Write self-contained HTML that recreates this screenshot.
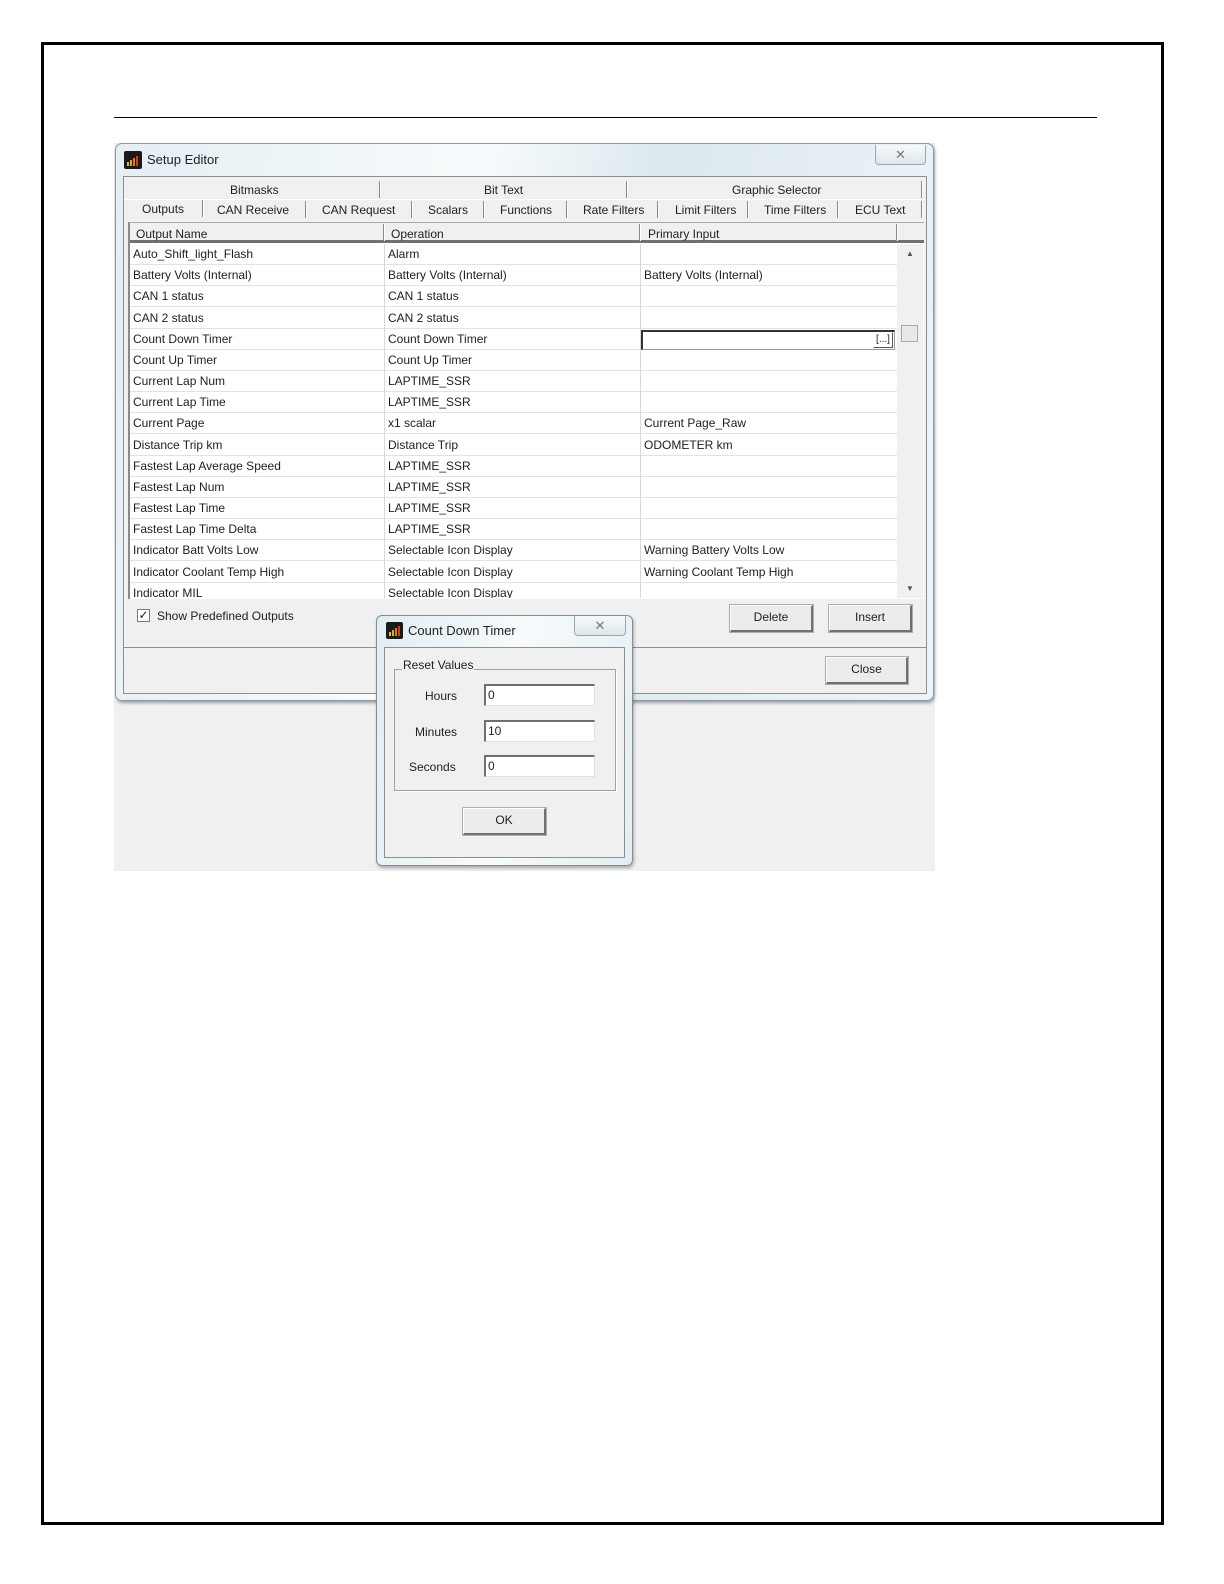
<!DOCTYPE html>
<html><head><meta charset="utf-8"><style>
*{margin:0;padding:0;box-sizing:border-box}
body{width:1224px;height:1584px;background:#fff;position:relative;overflow:hidden;font-family:"Liberation Sans",sans-serif;font-size:12px;color:#1e1e1e}
.a{position:absolute}
.t{position:absolute;white-space:nowrap;line-height:14px}
.btn{position:absolute;background:#ececec;border:1px solid #bbb;border-right:2px solid #707070;border-bottom:2px solid #707070;border-top:1px solid #fff;border-left:1px solid #fff;box-shadow:0 0 0 1px #adadad;text-align:center;line-height:23px}
.row{position:absolute;left:130px;width:767px;height:21px;border-bottom:1px solid #e2e2e2}
.row span{position:absolute;top:3px;white-space:nowrap}
.vd{position:absolute;width:1px;background:#d8d8d8}
.tabd{position:absolute;width:2px;height:17px;background:#888;border-right:1px solid #fff}
.fld{position:absolute;background:#fff;border-top:2px solid #6f6f6f;border-left:2px solid #6f6f6f;border-right:1px solid #e0e0e0;border-bottom:1px solid #e0e0e0;padding-left:2px;line-height:18px}
</style></head><body>
<div class="a" style="left:41px;top:42px;width:1123px;height:1483px;border:3px solid #000"></div>
<div class="a" style="left:114px;top:117px;width:983px;height:1px;background:#000"></div>

<!-- screenshot backdrop -->
<div class="a" style="left:114px;top:143px;width:821px;height:728px;background:#f0f0f0"></div>
<!-- main window frame -->
<div class="a" style="left:115px;top:143px;width:819px;height:558px;border-radius:7px;background:linear-gradient(100deg,#e4eef3 0%,#f7fbfc 40%,#dde9ef 60%,#eef5f8 100%);border:1px solid #8a9aa6;box-shadow:1px 2px 3px rgba(0,0,0,.35)"></div>
<svg class="a" style="left:124px;top:151px" width="18" height="18"><rect x="0" y="0" width="18" height="18" rx="2" fill="#1a1a1a"/><rect x="3" y="11" width="2" height="4" fill="#d9c21a"/><rect x="6" y="9" width="2" height="6" fill="#e0b01a"/><rect x="9" y="7" width="2" height="8" fill="#e07a1a"/><rect x="12" y="5" width="2" height="10" fill="#d83a1a"/></svg>
<div class="t" style="left:147px;top:153px;font-size:13px;color:#222">Setup Editor</div>
<div class="a" style="left:875px;top:145px;width:51px;height:20px;border:1px solid #9aa8b2;border-top:none;border-radius:0 0 4px 4px;background:linear-gradient(#f6f9fb,#dfe7ec);text-align:center;color:#777;font-size:13px;line-height:19px">✕</div>

<!-- client -->
<div class="a" style="left:123px;top:176px;width:804px;height:518px;background:#f0f0f0;border:1px solid #8e8e8e"></div>
<!-- tabs -->
<div class="a" style="left:124px;top:177px;width:802px;height:44px;background:#f0f0f0"></div>
<div class="t" style="left:230px;top:183px">Bitmasks</div>
<div class="t" style="left:484px;top:183px">Bit Text</div>
<div class="t" style="left:732px;top:183px">Graphic Selector</div>
<div class="tabd" style="left:379px;top:181px"></div>
<div class="tabd" style="left:626px;top:181px"></div>
<div class="tabd" style="left:921px;top:181px"></div>
<div class="a" style="left:124px;top:199px;width:802px;height:1px;background:#fff"></div>
<div class="t" style="left:142px;top:202px">Outputs</div>
<div class="t" style="left:217px;top:203px">CAN Receive</div>
<div class="t" style="left:322px;top:203px">CAN Request</div>
<div class="t" style="left:428px;top:203px">Scalars</div>
<div class="t" style="left:500px;top:203px">Functions</div>
<div class="t" style="left:583px;top:203px">Rate Filters</div>
<div class="t" style="left:675px;top:203px">Limit Filters</div>
<div class="t" style="left:764px;top:203px">Time Filters</div>
<div class="t" style="left:855px;top:203px">ECU Text</div>
<div class="tabd" style="left:202px;top:200px"></div>
<div class="tabd" style="left:305px;top:201px"></div>
<div class="tabd" style="left:411px;top:201px"></div>
<div class="tabd" style="left:483px;top:201px"></div>
<div class="tabd" style="left:566px;top:201px"></div>
<div class="tabd" style="left:657px;top:201px"></div>
<div class="tabd" style="left:747px;top:201px"></div>
<div class="tabd" style="left:837px;top:201px"></div>
<div class="tabd" style="left:921px;top:201px"></div>

<!-- grid -->
<div class="a" style="left:128px;top:222px;width:796px;height:377px;background:#fff;border-left:2px solid #8a8a8a;border-top:1px solid #aaa"></div>
<div class="a" style="left:130px;top:223px;width:794px;height:20px;background:#f0f0f0;border-bottom:3px solid #707070"></div>
<div class="t" style="left:136px;top:227px">Output Name</div>
<div class="t" style="left:391px;top:227px">Operation</div>
<div class="t" style="left:648px;top:227px">Primary Input</div>
<div class="tabd" style="left:383px;top:224px"></div>
<div class="tabd" style="left:639px;top:224px"></div>
<div class="tabd" style="left:896px;top:224px"></div>
<div class="a" style="left:130px;top:244px;width:767px;height:354px;overflow:hidden">
<div style="position:relative;left:-130px;top:-244px">
<div class="row" style="top:244px"><span style="left:3px">Auto_Shift_light_Flash</span><span style="left:258px">Alarm</span></div>
<div class="row" style="top:265px"><span style="left:3px">Battery Volts (Internal)</span><span style="left:258px">Battery Volts (Internal)</span><span style="left:514px">Battery Volts (Internal)</span></div>
<div class="row" style="top:286px"><span style="left:3px">CAN 1 status</span><span style="left:258px">CAN 1 status</span></div>
<div class="row" style="top:308px"><span style="left:3px">CAN 2 status</span><span style="left:258px">CAN 2 status</span></div>
<div class="row" style="top:329px"><span style="left:3px">Count Down Timer</span><span style="left:258px">Count Down Timer</span></div>
<div class="row" style="top:350px"><span style="left:3px">Count Up Timer</span><span style="left:258px">Count Up Timer</span></div>
<div class="row" style="top:371px"><span style="left:3px">Current Lap Num</span><span style="left:258px">LAPTIME_SSR</span></div>
<div class="row" style="top:392px"><span style="left:3px">Current Lap Time</span><span style="left:258px">LAPTIME_SSR</span></div>
<div class="row" style="top:413px"><span style="left:3px">Current Page</span><span style="left:258px">x1 scalar</span><span style="left:514px">Current Page_Raw</span></div>
<div class="row" style="top:435px"><span style="left:3px">Distance Trip km</span><span style="left:258px">Distance Trip</span><span style="left:514px">ODOMETER km</span></div>
<div class="row" style="top:456px"><span style="left:3px">Fastest Lap Average Speed</span><span style="left:258px">LAPTIME_SSR</span></div>
<div class="row" style="top:477px"><span style="left:3px">Fastest Lap Num</span><span style="left:258px">LAPTIME_SSR</span></div>
<div class="row" style="top:498px"><span style="left:3px">Fastest Lap Time</span><span style="left:258px">LAPTIME_SSR</span></div>
<div class="row" style="top:519px"><span style="left:3px">Fastest Lap Time Delta</span><span style="left:258px">LAPTIME_SSR</span></div>
<div class="row" style="top:540px"><span style="left:3px">Indicator Batt Volts Low</span><span style="left:258px">Selectable Icon Display</span><span style="left:514px">Warning Battery Volts Low</span></div>
<div class="row" style="top:562px"><span style="left:3px">Indicator Coolant Temp High</span><span style="left:258px">Selectable Icon Display</span><span style="left:514px">Warning Coolant Temp High</span></div>
<div class="row" style="top:583px"><span style="left:3px">Indicator MIL</span><span style="left:258px">Selectable Icon Display</span></div>
<div class="vd" style="left:384px;top:244px;height:360px"></div>
<div class="vd" style="left:640px;top:244px;height:360px"></div>
</div></div>
<!-- edit box -->
<div class="a" style="left:641px;top:330px;width:254px;height:20px;background:#fff;border-top:2px solid #333;border-left:2px solid #333;border-right:1px solid #999;border-bottom:1px solid #999"></div>
<div class="a" style="left:873px;top:332px;width:20px;height:16px;border:1px solid #555;border-top-color:#fff;border-left-color:#fff;font-size:10px;line-height:14px;text-align:center">[...]</div>
<!-- scrollbar -->
<div class="a" style="left:897px;top:244px;width:26px;height:354px;background:#f0f0f0"></div>
<div class="t" style="left:906px;top:247px;font-size:8px;color:#555">▲</div>
<div class="t" style="left:906px;top:582px;font-size:8px;color:#555">▼</div>
<div class="a" style="left:901px;top:325px;width:17px;height:17px;background:#e8e8e8;border:1px solid #aaa"></div>

<!-- checkbox -->
<div class="a" style="left:137px;top:609px;width:13px;height:13px;background:#fff;border:1px solid #777;font-size:12px;line-height:11px;text-align:center">✓</div>
<div class="t" style="left:157px;top:609px">Show Predefined Outputs</div>
<div class="btn" style="left:730px;top:605px;width:83px;height:27px">Delete</div>
<div class="btn" style="left:829px;top:605px;width:83px;height:27px">Insert</div>
<div class="a" style="left:124px;top:647px;width:802px;height:1px;background:#8e8e8e"></div>
<div class="btn" style="left:826px;top:657px;width:82px;height:27px">Close</div>

<!-- small dialog -->
<div class="a" style="left:376px;top:615px;width:257px;height:251px;border-radius:6px;background:linear-gradient(100deg,#e2edf2,#f7fbfc 50%,#e4eef2);border:1px solid #7f8f9a;box-shadow:1px 2px 3px rgba(0,0,0,.3)"></div>
<svg class="a" style="left:386px;top:622px" width="17" height="17"><rect width="17" height="17" rx="2" fill="#1a1a1a"/><rect x="3" y="10" width="2" height="4" fill="#d9c21a"/><rect x="6" y="8" width="2" height="6" fill="#e0b01a"/><rect x="9" y="6" width="2" height="8" fill="#e07a1a"/><rect x="12" y="4" width="2" height="10" fill="#d83a1a"/></svg>
<div class="t" style="left:408px;top:624px;font-size:13px;color:#222">Count Down Timer</div>
<div class="a" style="left:574px;top:616px;width:52px;height:20px;border:1px solid #9aa8b2;border-top:none;border-radius:0 0 4px 4px;background:linear-gradient(#f6f9fb,#dfe7ec);text-align:center;color:#777;font-size:13px;line-height:19px">✕</div>
<div class="a" style="left:384px;top:647px;width:241px;height:211px;background:#f0f0f0;border:1px solid #8e8e8e"></div>
<div class="a" style="left:394px;top:669px;width:222px;height:122px;border:1px solid #a0a0a0;box-shadow:1px 1px 0 #fff"></div>
<div class="t" style="left:402px;top:658px;background:#f0f0f0;padding:0 1px">Reset Values</div>
<div class="t" style="left:425px;top:689px">Hours</div>
<div class="t" style="left:415px;top:725px">Minutes</div>
<div class="t" style="left:409px;top:760px">Seconds</div>
<div class="fld" style="left:484px;top:684px;width:111px;height:22px">0</div>
<div class="fld" style="left:484px;top:720px;width:111px;height:22px">10</div>
<div class="fld" style="left:484px;top:755px;width:111px;height:22px">0</div>
<div class="btn" style="left:463px;top:808px;width:83px;height:27px">OK</div>
</body></html>
